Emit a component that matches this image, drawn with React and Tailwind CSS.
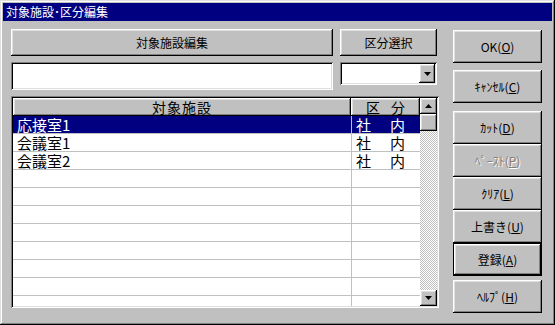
import React from 'react';

const raised = 'shadow-[inset_-1px_-1px_#000,inset_1px_1px_#fff,inset_-2px_-2px_#808080,inset_2px_2px_#dfdfdf]';
const sunken = 'shadow-[inset_1px_1px_#808080,inset_-1px_-1px_#fff,inset_2px_2px_#000,inset_-2px_-2px_#dfdfdf]';

const rows = [
  { name: '応接室1', kind: true, selected: true },
  { name: '会議室1', kind: true },
  { name: '会議室2', kind: true },
  {}, {}, {}, {}, {}, {}, {}, {},
];

const Arrow = ({ up }) => (
  <svg width="7" height="4" viewBox="0 0 7 4" className="block">
    <polygon points={up ? '3.5,0 7,4 0,4' : '0,0 7,0 3.5,4'} fill="#000" />
  </svg>
);

const SideButton = ({ children, disabled, isDefault, className = '' }) => (
  <div className={`h-[33px] ${isDefault ? 'border border-black' : ''} ${className}`}>
    <div className={`h-full flex items-center justify-center text-[12px] leading-[14px] ${raised} ${disabled ? 'text-[#808080] [text-shadow:1px_1px_#fff]' : 'text-black'}`}>
      {children}
    </div>
  </div>
);

export default function App() {
  return (
    <div className="w-[555px] h-[325px] bg-[#c0c0c0] p-[3px] flex flex-col font-['Noto_Sans_CJK_JP',sans-serif] shadow-[inset_-1px_-1px_#000,inset_1px_1px_#dfdfdf,inset_-2px_-2px_#808080,inset_2px_2px_#fff]">
      {/* title bar */}
      <div className="h-[18px] bg-[#000080] text-white text-[12px] leading-[18px] pl-[3px]">対象施設･区分編集</div>

      <div className="flex pl-[8px] pt-[8px]">
        {/* left side */}
        <div className="w-[428px] flex flex-col">
          <div className="flex gap-[7px] h-[27px]">
            <div className={`w-[322px] flex items-center justify-center text-[12px] ${raised}`}>対象施設編集</div>
            <div className={`w-[97px] flex items-center justify-center text-[12px] ${raised}`}>区分選択</div>
          </div>

          <div className="flex gap-[7px] mt-[6px] items-start">
            <div className={`w-[322px] h-[28px] bg-white ${sunken}`} />
            <div className={`w-[97px] h-[23px] bg-white p-[2px] flex justify-end ${sunken}`}>
              <div className={`w-[16px] h-full bg-[#c0c0c0] flex items-center justify-center ${raised}`}>
                <Arrow />
              </div>
            </div>
          </div>

          {/* list */}
          <div className={`mt-[6px] h-[212px] p-[2px] flex bg-white ${sunken}`}>
            <div className="w-[407px] flex flex-col overflow-hidden">
              <div className="flex h-[18px] shrink-0 bg-[#c0c0c0] text-[14px] leading-[18px]">
                <div className={`w-[338px] text-center tracking-[1px] ${raised}`}>対象施設</div>
                <div className={`w-[69px] flex justify-center gap-[11px] ${raised}`}>
                  <span>区</span>
                  <span>分</span>
                </div>
              </div>
              {rows.map((r, i) => (
                <div
                  key={i}
                  className={`flex h-[18px] shrink-0 border-b border-[#c0c0c0] text-[15px] leading-[17px] ${r.selected ? 'bg-[#000080] text-white' : 'bg-white text-black'}`}
                >
                  <div className="w-[338px] pl-[4px]">{r.name}</div>
                  <div className="w-[69px] border-l border-[#c0c0c0] flex pl-[4px]">
                    {r.kind && (
                      <>
                        <span>社</span>
                        <span className="ml-[19px]">内</span>
                      </>
                    )}
                  </div>
                </div>
              ))}
            </div>

            {/* scrollbar */}
            <div className="w-[17px] flex flex-col">
              <div className={`h-[16px] bg-[#c0c0c0] flex items-center justify-center ${raised}`}>
                <Arrow up />
              </div>
              <div className={`h-[17px] bg-[#c0c0c0] ${raised}`} />
              <div className="flex-1 bg-[repeating-conic-gradient(#c0c0c0_0_25%,#fff_0_50%)] bg-[length:2px_2px]" />
              <div className={`h-[16px] bg-[#c0c0c0] flex items-center justify-center ${raised}`}>
                <Arrow />
              </div>
            </div>
          </div>
        </div>

        {/* right buttons */}
        <div className="w-[89px] ml-[14px] pt-[1px] flex flex-col">
          <SideButton>OK(<u>O</u>)</SideButton>
          <SideButton className="mt-[7px]">ｷｬﾝｾﾙ(<u>C</u>)</SideButton>
          <SideButton className="mt-[8px]">ｶｯﾄ(<u>D</u>)</SideButton>
          <SideButton disabled>ﾍﾟｰｽﾄ(<u>P</u>)</SideButton>
          <SideButton>ｸﾘｱ(<u>L</u>)</SideButton>
          <SideButton>上書き(<u>U</u>)</SideButton>
          <SideButton isDefault>登録(<u>A</u>)</SideButton>
          <SideButton className="mt-[4px]">ﾍﾙﾌﾟ(<u>H</u>)</SideButton>
        </div>
      </div>
    </div>
  );
}
